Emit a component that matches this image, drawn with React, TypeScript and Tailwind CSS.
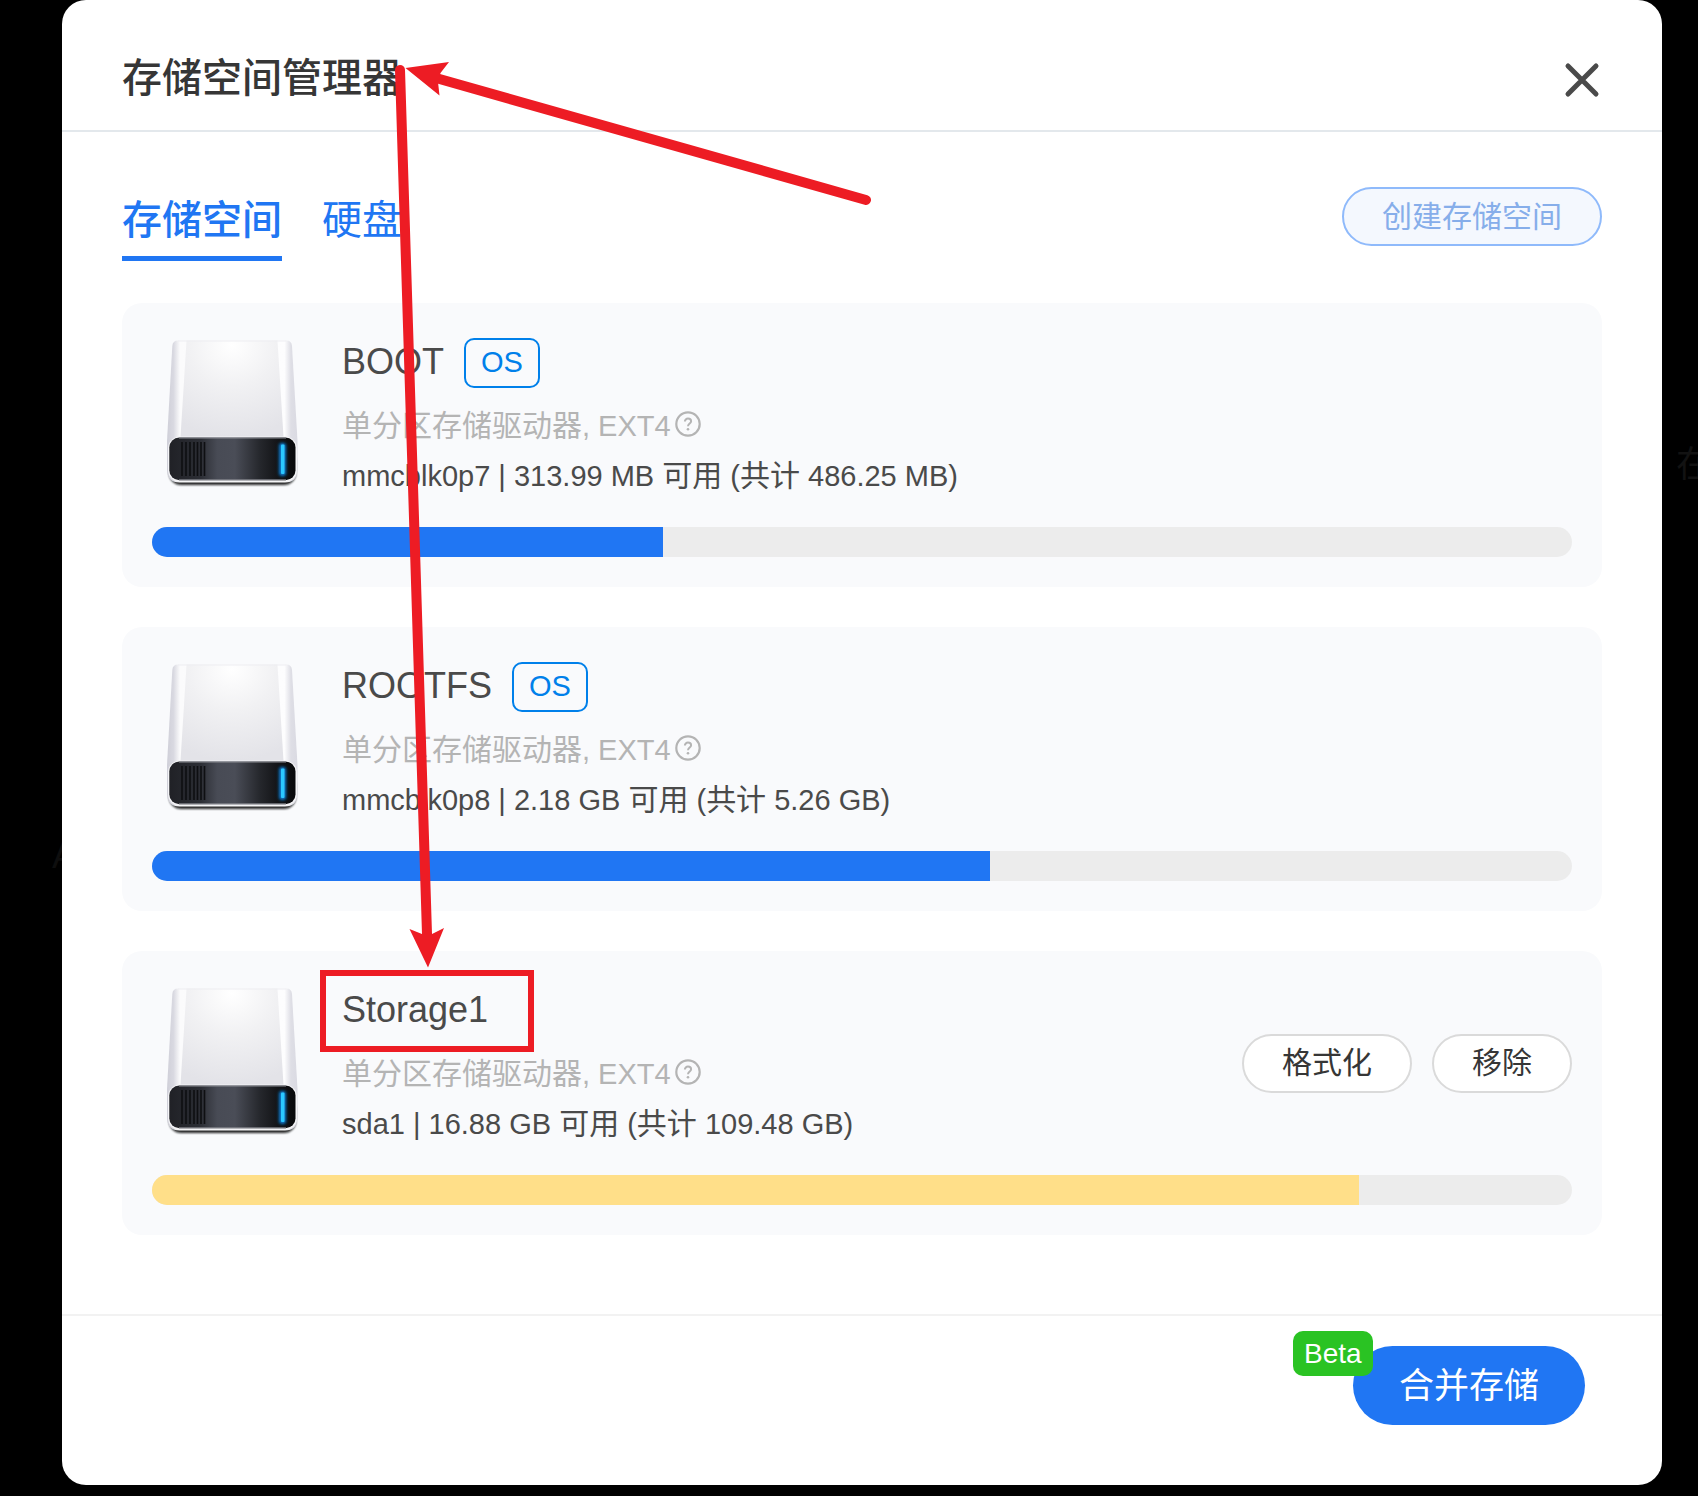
import React from "react";

type Volume = {
  name: string;
  system: boolean;
  device: string;
  free: string;
  total: string;
  used: number;
  warn?: boolean;
  actions?: string[];
};

const volumes: Volume[] = [
  { name: "BOOT", system: true, device: "mmcblk0p7", free: "313.99 MB", total: "486.25 MB", used: 36 },
  { name: "ROOTFS", system: true, device: "mmcblk0p8", free: "2.18 GB", total: "5.26 GB", used: 59 },
  {
    name: "Storage1",
    system: false,
    device: "sda1",
    free: "16.88 GB",
    total: "109.48 GB",
    used: 85,
    warn: true,
    actions: ["格式化", "移除"],
  },
];

function DriveIcon({ id }: { id: string }) {
  return (
    <svg className="h-[164px] w-[160px] shrink-0" viewBox="0 0 160 164" aria-hidden="true">
      <defs>
        <linearGradient id={`${id}-side`} x1="0" x2="1" y1="0" y2="0">
          <stop offset="0" stopColor="#cfcfd8" />
          <stop offset="0.05" stopColor="#d9d9e1" />
          <stop offset="0.1" stopColor="#fbfbfc" />
          <stop offset="0.9" stopColor="#fdfdfe" />
          <stop offset="0.95" stopColor="#dedee5" />
          <stop offset="1" stopColor="#dadae2" />
        </linearGradient>
        <radialGradient id={`${id}-top`} cx="0.5" cy="0.05" r="0.95">
          <stop offset="0" stopColor="#ffffff" />
          <stop offset="0.45" stopColor="#f1f1f3" />
          <stop offset="1" stopColor="#e3e3e8" />
        </radialGradient>
        <linearGradient id={`${id}-front`} x1="0" x2="1" y1="0" y2="0">
          <stop offset="0" stopColor="#202126" />
          <stop offset="0.25" stopColor="#2c2e35" />
          <stop offset="0.38" stopColor="#484b55" />
          <stop offset="0.52" stopColor="#4a4d57" />
          <stop offset="0.72" stopColor="#25272c" />
          <stop offset="0.86" stopColor="#131417" />
          <stop offset="1" stopColor="#08090b" />
        </linearGradient>
        <filter id={`${id}-soft`} x="-20%" y="-50%" width="140%" height="200%">
          <feGaussianBlur stdDeviation="1.2" />
        </filter>
        <filter id={`${id}-glow`} x="-300%" y="-20%" width="700%" height="140%">
          <feGaussianBlur stdDeviation="1.8" />
        </filter>
      </defs>
      <rect x="17" y="117" width="127" height="35" rx="12" fill="#0c0e0e" opacity="0.9" filter={`url(#${id}-soft)`} />
      <path
        d="M26 7.5H134.500Q139.500 7.500 140 13L145.500 108V137Q145 149.500 133 149.500H27.500Q15.500 149.500 15 137V108L20.300 13Q20.700 7.500 26 7.500Z"
        fill={`url(#${id}-side)`}
      />
      <path d="M34.500 7.500H125.500L131.500 104H28.500Z" fill={`url(#${id}-top)`} />
      <path d="M26 8H134.500" stroke="#ededf1" strokeWidth="1" />
      <rect x="16" y="103.500" width="129" height="45.500" rx="12" fill="#f4f4f6" />
      <rect x="17.300" y="104.500" width="126.200" height="42.800" rx="10" fill={`url(#${id}-front)`} />
      <path d="M27 105H134" stroke="#8b8d94" strokeWidth="1" />
      <path d="M27 146.800H134" stroke="#85878e" strokeWidth="1" />
      <g stroke="#0e0f12" strokeWidth="1.600">
        <path d="M30 109V143M34 109V143M38 109V143M42 109V143M45.500 109V143M49 109V143M52.500 109V143" />
      </g>
      <rect x="127" y="110" width="7" height="33" rx="3" fill="#0a7ad0" filter={`url(#${id}-glow)`} />
      <rect x="129" y="111.500" width="3.500" height="29.500" rx="1" fill="#2bc8ff" />
    </svg>
  );
}

function HelpIcon() {
  return (
    <svg className="size-[26px]" viewBox="0 0 26 26" fill="none" stroke="currentColor" aria-hidden="true">
      <circle cx="13" cy="13" r="11.700" strokeWidth="2.200" />
      <path
        d="M9.900 10.600C9.900 8.800 11.200 7.600 13 7.600S16.100 8.700 16.100 10.300C16.100 12.400 13 12.700 13 15.200"
        strokeWidth="2"
      />
      <circle cx="13" cy="18.200" r="1.300" fill="currentColor" stroke="none" />
    </svg>
  );
}

function VolumeCard({ volume }: { volume: Volume }) {
  return (
    <li className="rounded-[20px] bg-[#f9fafc] p-[30px]">
      <div className="mb-[30px] flex items-center">
        <DriveIcon id={volume.device} />
        <div className="-mb-1 ml-[30px] flex min-w-0 flex-1 flex-col self-start">
          <div className="flex h-[60px] items-center gap-5">
            <h2 className="pb-0.5 text-[36px] leading-[50px] text-[#4a4a4a]">{volume.name}</h2>
            {volume.system && (
              <span className="rounded-[10px] border-2 border-[#0080ea] px-[15px] pb-0.5 text-[29px] leading-[44px] text-[#0080ea]">
                OS
              </span>
            )}
          </div>
          <p className="mt-2 flex items-start text-[30px] leading-[50px] text-[#b4b4b4]">
            <span>
              单分区存储驱动器<span className="text-[29px]">, EXT4</span>
            </span>
            <button type="button" aria-label="帮助" className="ml-1 pt-2.5">
              <HelpIcon />
            </button>
          </p>
          <p className="text-[30px] leading-[50px] text-[#4a4a4a]">
            <span className="text-[29px]">
              {volume.device} | {volume.free}{" "}
            </span>
            可用
            <span className="text-[29px]"> (</span>
            共计
            <span className="text-[29px]"> {volume.total})</span>
          </p>
        </div>
        {volume.actions && (
          <div className="flex gap-5">
            {volume.actions.map((label) => (
              <button
                key={label}
                type="button"
                className="h-[59px] rounded-full border-2 border-[#dadada] bg-white px-[38px] text-[30px] leading-none text-[#363636]"
              >
                {label}
              </button>
            ))}
          </div>
        )}
      </div>
      <div
        role="progressbar"
        aria-label={volume.name}
        aria-valuenow={volume.used}
        aria-valuemin={0}
        aria-valuemax={100}
        className="h-[30px] overflow-hidden rounded-full bg-[#ececec]"
      >
        <div
          className={volume.warn ? "h-full bg-[#ffdf89]" : "h-full bg-[#2076f3]"}
          style={{ width: `${volume.used}%` }}
        />
      </div>
    </li>
  );
}

function Annotations() {
  return (
    <svg
      className="pointer-events-none absolute top-0 left-0 h-[1100px] w-[900px]"
      viewBox="0 0 900 1100"
      fill="none"
      aria-hidden="true"
    >
      <g stroke="#ed1c24" strokeWidth="10" strokeLinecap="round">
        <path d="M866 200L436 78" />
        <path d="M400 70L427 934" />
      </g>
      <path d="M405.500 68L449 62L440.500 73L438 82L439.500 95.500Z" fill="#ed1c24" />
      <path d="M428 967.500L409.500 929L422 934H432L444 928Z" fill="#ed1c24" />
      <rect x="323" y="973" width="208" height="76" stroke="#ed1c24" strokeWidth="6" />
    </svg>
  );
}

export default function App() {
  return (
    <div className="relative min-h-screen overflow-hidden bg-black pr-9 pb-2.5 pl-[62px] font-['Liberation_Sans','Noto_Sans_CJK_SC',sans-serif]">
      <span className="absolute top-[439px] -right-[14px] text-[36px] leading-[52px] text-[#121212]">在</span>
      <span className="absolute top-[834px] left-[52px] text-[36px] leading-[44px] text-[#0e0e0e]">A</span>
      <div role="dialog" aria-labelledby="dialog-title" className="relative rounded-3xl bg-white">
        <header className="flex h-[132px] items-start justify-between border-b-2 border-[#e3e8ec] px-[60px] pt-12">
          <h1 id="dialog-title" className="text-[40px] leading-[60px] font-medium text-[#363636]">
            存储空间管理器
          </h1>
          <button type="button" aria-label="关闭" className="flex h-16 w-10 items-center text-[#4a4a4a]">
            <svg className="size-10" viewBox="0 0 40 40" fill="none" stroke="currentColor" strokeWidth="5" strokeLinecap="round">
              <path d="M6 6L34 34M34 6L6 34" />
            </svg>
          </button>
        </header>

        <main className="px-[60px] pt-[55px] pb-[79px]">
          <div className="flex items-start justify-between">
            <div role="tablist" className="flex gap-10 text-[40px] leading-[60px] text-[#2076f3]">
              <button
                role="tab"
                type="button"
                aria-selected="true"
                className="border-b-[5px] border-[#2076f3] pt-[3px] pb-1.5 font-medium"
              >
                存储空间
              </button>
              <button role="tab" type="button" aria-selected="false" className="border-b-[5px] border-transparent pt-[3px] pb-1.5">
                硬盘
              </button>
            </div>
            <button
              type="button"
              disabled
              className="h-[59px] rounded-full border-2 border-[#8fbafb] bg-[#f4f8fe] px-[38px] text-[30px] leading-none text-[#86aeea]"
            >
              创建存储空间
            </button>
          </div>

          <ul className="mt-[42px] flex flex-col gap-10">
            {volumes.map((v) => (
              <VolumeCard key={v.name} volume={v} />
            ))}
          </ul>
        </main>

        <footer className="flex justify-end border-t-2 border-[#f2f2f2] px-[77px] pt-[30px] pb-[60px]">
          <button
            type="button"
            className="relative h-[79px] rounded-full bg-[#2076f3] px-[46px] text-[35px] leading-none text-white"
          >
            合并存储
            <span className="absolute -top-[15px] -left-[60px] rounded-[10px] bg-[#2ac323] px-[11px] text-[28px] leading-[45px]">
              Beta
            </span>
          </button>
        </footer>
      </div>
      <Annotations />
    </div>
  );
}
